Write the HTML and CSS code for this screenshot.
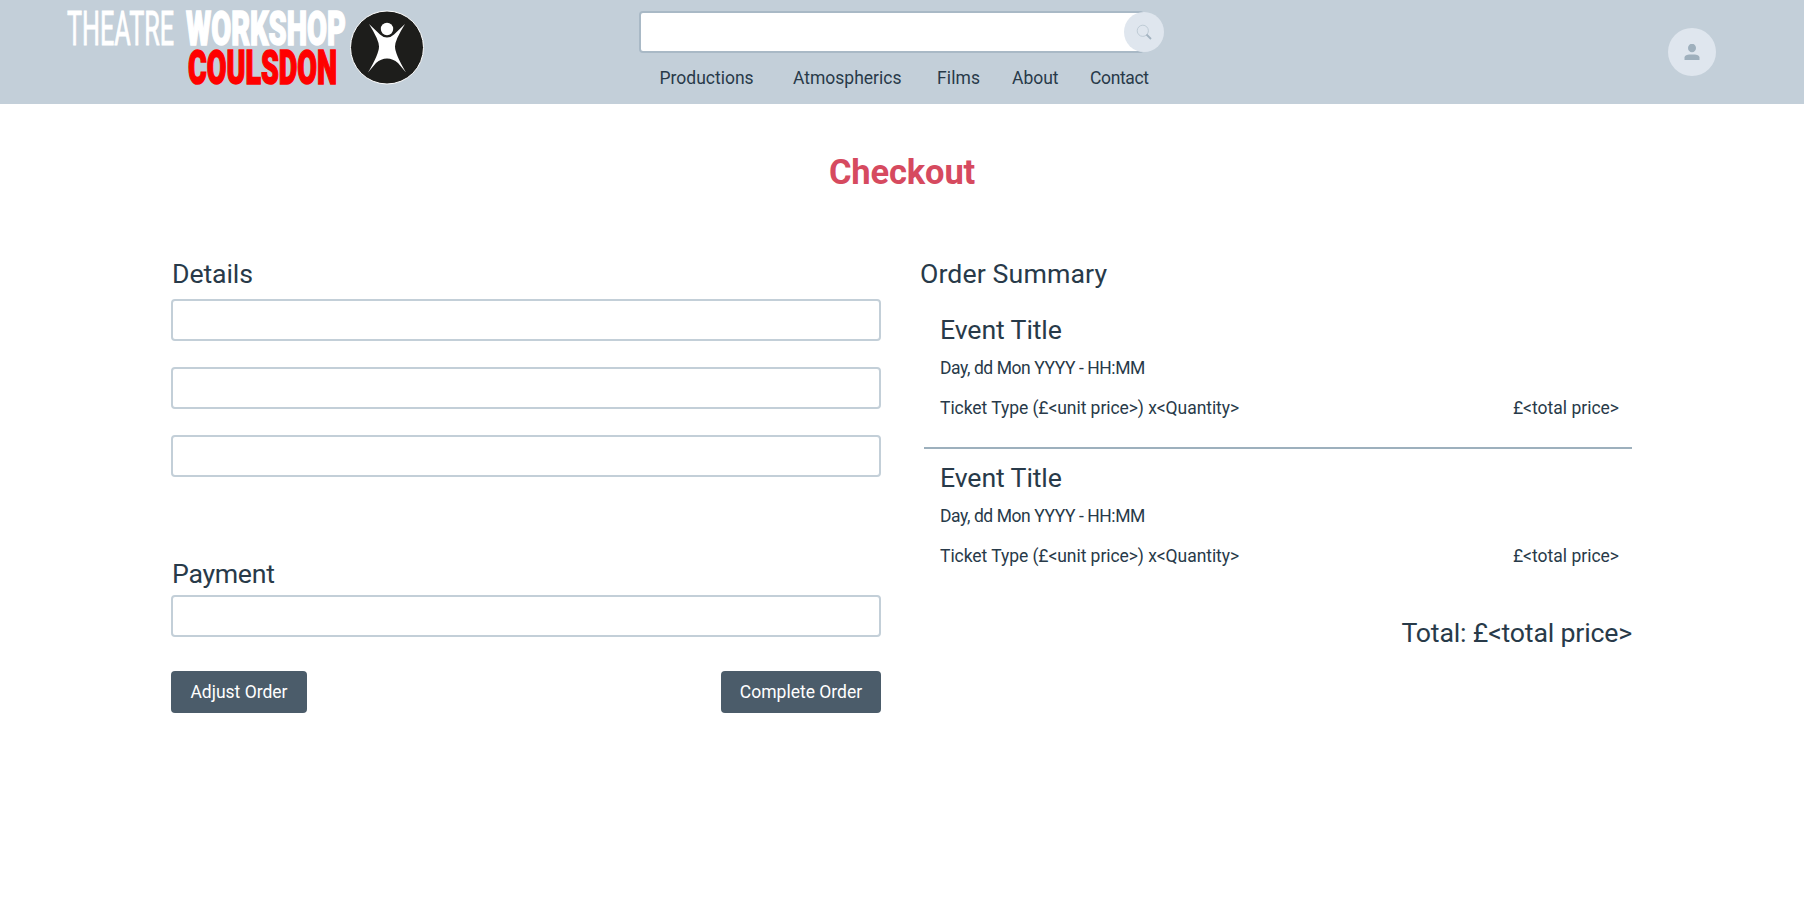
FILE: index.html
```html
<!DOCTYPE html>
<html lang="en">
<head>
<meta charset="utf-8">
<title>Checkout</title>
<link rel="stylesheet" href="styles.css">
</head>
<body>
<header class="header">
  <svg class="logo" viewBox="0 0 370 90" role="img" aria-label="Theatre Workshop Coulsdon">
    <text class="logo-light" x="7" y="45" textLength="107" lengthAdjust="spacingAndGlyphs">THEATRE</text>
    <text class="logo-heavy" x="126" y="44.800" textLength="160" lengthAdjust="spacingAndGlyphs">WORKSHOP</text>
    <text class="logo-heavy logo-red" x="128" y="83.500" textLength="149" lengthAdjust="spacingAndGlyphs">COULSDON</text>
    <circle cx="327" cy="47.500" r="36.500" fill="#1d1d1b" stroke="#fff"/>
    <circle cx="327" cy="29" r="6.200" fill="#fff"/>
    <path d="M309 24 L320 34.500 Q323 37.500 327 37.500 Q331 37.500 334 34.500 L345 24 Q335 40 335 46.500 Q335 54 346 72.500 L338 63 Q333 58.500 327 58.500 Q321 58.500 316 63 L308 72.500 Q319 54 319 46.500 Q319 40 309 24Z" fill="#fff"/>
  </svg>
  <div class="center">
    <div class="search">
      <input class="search-input" type="text" aria-label="Search">
      <button class="search-button" aria-label="Search">
        <svg class="search-icon" viewBox="0 0 16 16"><circle cx="6.800" cy="6.800" r="5.600" fill="none" stroke="#bfccd6"/><path d="M10.500 10.500l4.500 4.500" stroke="#a3b3c0" stroke-width="1.800"/></svg>
      </button>
    </div>
    <nav class="nav">
      <a class="nav-productions">Productions</a><a class="nav-atmospherics">Atmospherics</a><a class="nav-films">Films</a><a class="nav-about">About</a><a class="nav-contact">Contact</a>
    </nav>
  </div>
  <button class="account" aria-label="Account">
    <svg class="account-icon" viewBox="0 0 16 16"><ellipse cx="8" cy="4" rx="4" ry="4.300"/><path d="M.5 16v-2.500C.5 11 4 10.500 8 10.500s7.500.5 7.500 3V16z"/></svg>
  </button>
</header>
<main class="main">
  <h1 class="title">Checkout</h1>
  <div class="columns">
    <form class="form">
      <h2 class="heading">Details</h2>
      <div class="fields">
        <input class="field" type="text"><input class="field" type="text"><input class="field" type="text">
      </div>
      <h2 class="heading heading-payment">Payment</h2>
      <input class="field" type="text">
      <div class="actions">
        <button class="button button-adjust" type="button">Adjust Order</button>
        <button class="button button-complete" type="button">Complete Order</button>
      </div>
    </form>
    <section class="summary">
      <h2 class="heading heading-summary">Order Summary</h2>
      <article class="event">
        <h3 class="event-title">Event Title</h3>
        <p class="date">Day, dd Mon YYYY - HH:MM</p>
        <p class="ticket"><span class="ticket-type">Ticket Type (£&lt;unit price&gt;) x&lt;Quantity&gt;</span><span class="price">£&lt;total price&gt;</span></p>
      </article>
      <article class="event">
        <h3 class="event-title">Event Title</h3>
        <p class="date">Day, dd Mon YYYY - HH:MM</p>
        <p class="ticket"><span class="ticket-type">Ticket Type (£&lt;unit price&gt;) x&lt;Quantity&gt;</span><span class="price">£&lt;total price&gt;</span></p>
      </article>
      <p class="total">Total: £&lt;total price&gt;</p>
    </section>
  </div>
</main>
</body>
</html>
```
FILE: styles.css
```css
* { box-sizing: border-box; }
body { margin: 0; background: #fff; color: #283a49; font: 17.5px/24px Roboto, "Liberation Sans", sans-serif; }
h1, h2, h3, p { margin: 0; font-weight: 400; }
button { border: 0; padding: 0; font: inherit; }
.header { display: flex; height: 104px; background: #c3cfd9; padding: 0 88px 0 60px; }
.logo { width: 370px; height: 90px; flex: none; overflow: visible; }
.logo-light { font: 400 48px Roboto, sans-serif; fill: #fff; stroke: #fff; stroke-width: .9px; }
.logo-heavy { font: 900 48px Roboto, sans-serif; fill: #fff; stroke: #fff; stroke-width: 1.6px; }
.logo-red { fill: #f00; stroke: #f00; }
.center { width: 525px; margin-left: 209px; padding-top: 11px; }
.search { display: flex; align-items: center; height: 42px; }
.search-input { width: 505px; height: 42px; border: 2px solid #a9b9c6; border-radius: 4px; background: #fff; }
.search-button { width: 40px; height: 40px; margin-left: -20px; border-radius: 50%; background: #dfe6ee; display: grid; place-items: center; }
.search-icon { width: 16px; height: 16px; }
.nav { display: flex; padding: 13px 0 0 20.5px; white-space: nowrap; }
.nav-productions { width: 133.5px; }
.nav-atmospherics { width: 144px; }
.nav-films { width: 75px; letter-spacing: .1px; }
.nav-about { width: 78px; }
.nav-contact { letter-spacing: -.35px; }
.account { width: 48px; height: 48px; margin: 28px 0 0 auto; border-radius: 50%; background: #dfe6ee; display: grid; place-items: center; }
.account-icon { width: 16px; height: 16px; fill: #9fb0bd; }
.title { color: #d64a5f; font-size: 34.5px; line-height: 40px; font-weight: 700; letter-spacing: -.15px; text-align: center; padding-top: 48px; }
.columns { display: flex; padding: 66px 171px 0; gap: 40px; }
.form { width: 710px; }
.heading, .event-title, .total { font-size: 26.7px; line-height: 32px; letter-spacing: -.12px; }
.heading { padding-left: 1px; }
.fields { display: grid; gap: 26px; margin-top: 9px; }
.field { display: block; width: 100%; height: 42px; border: 2px solid #c3cfd8; border-radius: 4px; background: #fff; }
.heading-payment { margin: 81px 0 5px; letter-spacing: -.3px; }
.actions { display: flex; justify-content: space-between; margin-top: 34px; }
.button { height: 42px; border-radius: 4px; background: #4b5c6a; color: #fff; }
.button-adjust { width: 136px; }
.button-complete { width: 160px; }
.summary { width: 711px; }
.heading-summary { padding: 0; margin-left: -1px; letter-spacing: .1px; }
.event { margin-left: 3px; padding: 24px 13px 27px 16px; }
.event + .event { border-top: 2px solid #9db0bd; padding-top: 13px; }
.date { margin-top: 10px; letter-spacing: -.43px; }
.ticket { margin-top: 16px; display: flex; justify-content: space-between; }
.ticket-type { letter-spacing: -.06px; }
.total { text-align: right; margin-top: 22px; letter-spacing: -.18px; }
```
